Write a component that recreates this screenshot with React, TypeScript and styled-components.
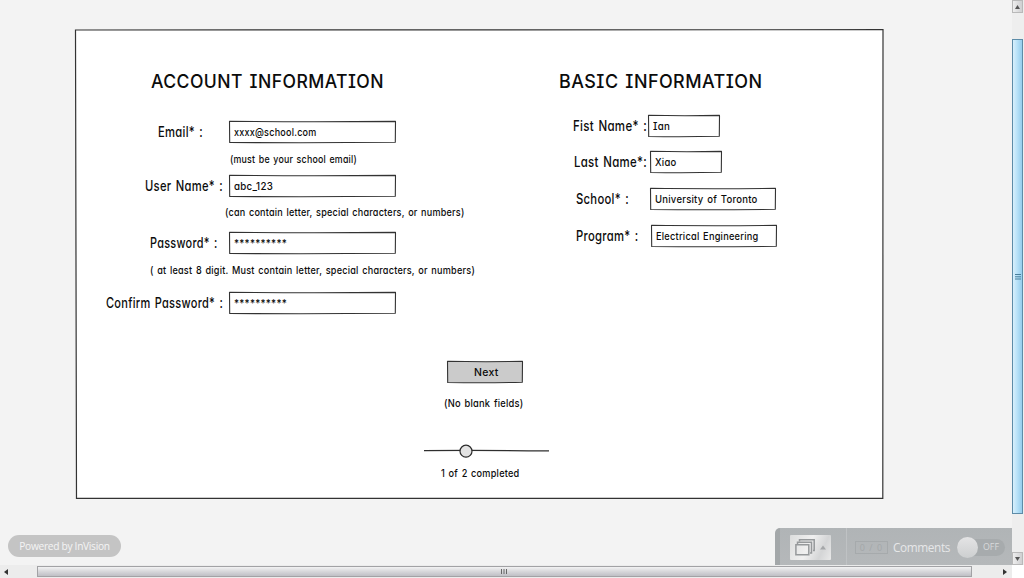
import React, { useLayoutEffect, useRef, useState } from "react";
import styled, { createGlobalStyle } from "styled-components";

const GlobalStyle = createGlobalStyle`
  * { box-sizing: border-box; }
  body { margin: 0; background: #f3f3f3; overflow: hidden; }
`;

const Shell = styled.div`
  display: grid;
  grid-template-columns: 1012px 12px;
  grid-template-rows: 565px 13px;
  width: 1024px;
  height: 578px;
  background: #f3f3f3;
`;

const Viewport = styled.main`
  display: flex;
  flex-direction: column;
  justify-content: space-between;
  padding-top: 29px;
`;

const Panel = styled.section`
  position: relative;
  z-index: 0;
  width: 809px;
  height: 470px;
  margin-left: 75px;
  display: flex;
  flex-direction: column;
`;

const Columns = styled.div`
  display: grid;
  grid-template-columns: 465px 1fr;
  height: 332px;
  padding-top: 43px;
`;

const Column = styled.div`
  display: flex;
  flex-direction: column;
`;

const Line = styled.div<{ $gap?: number; $indent: number; $height: number }>`
  display: flex;
  align-items: center;
  margin-top: ${(p) => p.$gap ?? 0}px;
  padding-left: ${(p) => p.$indent}px;
  height: ${(p) => p.$height}px;
`;

const HeadingLine = styled(Line)`
  padding-top: 1px;
`;

const LabelCell = styled.div<{ $width: number }>`
  flex: 0 0 ${(p) => p.$width}px;
  min-width: 0;
  display: flex;
  padding-top: 1px;
`;

const FieldBox = styled.div<{ $width: number }>`
  position: relative;
  z-index: 0;
  display: flex;
  align-items: center;
  width: ${(p) => p.$width}px;
  height: 22px;
  padding: 2px 0 0 5px;
`;

const NextButton = styled.button`
  position: relative;
  z-index: 0;
  display: flex;
  align-items: center;
  width: 76px;
  height: 22px;
  padding: 2px 0 0 27px;
  border: 0;
  background: transparent;
`;

const FrameSvg = styled.svg`
  position: absolute;
  z-index: -1;
  inset: 0;
  width: 100%;
  height: 100%;
  overflow: visible;
`;

const HandText = styled.span<{ $size: number; $heading: boolean }>`
  display: inline-block;
  flex: none;
  transform-origin: left center;
  font-family: "Comic Sans MS", Inter, sans-serif;
  font-feature-settings: "cv08", "cv11";
  font-size: ${(p) => p.$size}px;
  font-weight: ${(p) => (p.$heading ? 550 : 500)};
  line-height: 1;
  letter-spacing: 0.025em;
  word-spacing: ${(p) => (p.$heading ? -0.1 : 0.1)}em;
  color: #0c0c0c;
  white-space: pre;
`;

interface HandProps {
  text: string;
  width: number;
  size?: number;
  heading?: boolean;
}

/* Text that is condensed or stretched to fill the given width. */
function Hand({ text, width, size = 10.7, heading = false }: HandProps) {
  const ref = useRef<HTMLSpanElement>(null);
  const [scale, setScale] = useState(1);
  useLayoutEffect(() => {
    const el = ref.current;
    if (el) {
      setScale(width / parseFloat(getComputedStyle(el).width));
    }
  }, [text, width]);
  return (
    <HandText ref={ref} $size={size} $heading={heading} style={{ transform: `scaleX(${scale})` }}>
      {text}
    </HandText>
  );
}

function Frame({ w, h, fill = "#fff" }: { w: number; h: number; fill?: string }) {
  const r = w - 0.5;
  const b = h - 0.5;
  return (
    <FrameSvg viewBox={`0 0 ${w} ${h}`} aria-hidden>
      <path
        d={`M.5 .3 Q${w * 0.45} 1 ${r} .4 L${r - 0.2} ${b - 0.2} Q${w * 0.5} ${b + 0.6} .7 ${b} Z`}
        fill={fill}
        stroke="#333"
        strokeWidth="1.1"
        strokeLinejoin="round"
      />
    </FrameSvg>
  );
}

interface FieldProps {
  gap: number;
  indent: number;
  label: string;
  labelWidth: number;
  offset: number;
  width: number;
  value: string;
  valueWidth: number;
}

function Field({ gap, indent, label, labelWidth, offset, width, value, valueWidth }: FieldProps) {
  return (
    <Line $gap={gap} $indent={indent} $height={22}>
      <LabelCell $width={offset}>
        <Hand text={label} width={labelWidth} size={14.5} />
      </LabelCell>
      <FieldBox $width={width}>
        <Frame w={width} h={22} />
        <Hand text={value} width={valueWidth} />
      </FieldBox>
    </Line>
  );
}

function Hint({ gap, indent, text, width }: { gap: number; indent: number; text: string; width: number }) {
  return (
    <Line $gap={gap} $indent={indent} $height={14}>
      <Hand text={text} width={width} />
    </Line>
  );
}

const Footer = styled.footer`
  display: flex;
  justify-content: space-between;
  align-items: flex-start;
  height: 37px;
  padding-left: 8px;
`;

const Badge = styled.div`
  margin-top: 7px;
  width: 113px;
  height: 22px;
  border-radius: 11px;
  background: #c4c4c4;
  color: #f4f4f4;
  font: 400 10.2px/23px "Open Sans", sans-serif;
  text-align: center;
  white-space: nowrap;
  letter-spacing: -0.3px;
`;

const Toolbar = styled.div`
  display: flex;
  align-items: center;
  width: 237px;
  height: 37px;
  border-left: 5px solid #a3a7a9;
  border-radius: 5px 0 0 0;
  background: linear-gradient(#b0b4b6, #b5b8ba);
  font-family: "Open Sans", sans-serif;
`;

const ScreensButton = styled.div`
  width: 41px;
  height: 25px;
  margin: 1px 15px 0 10px;
  border-radius: 1px;
  background: linear-gradient(115deg, #dcdddd, #f0f0f0 45%, #d4d5d6 75%, #e9e9e9);
`;

const Tools = styled.div`
  display: flex;
  align-items: center;
  height: 37px;
  flex: 1;
  border-left: 1px solid #bfc2c4;
  padding-left: 8px;
`;

const Counter = styled.div`
  width: 33px;
  height: 13px;
  margin-top: 1px;
  border: 1px solid #a6aaac;
  color: #a3a7a9;
  font-size: 9px;
  line-height: 11px;
  text-align: center;
  letter-spacing: 1px;
`;

const Comments = styled.span`
  width: 57px;
  margin: 1px 0 0 5px;
  color: #e6e7e8;
  font-size: 11.8px;
  line-height: 16px;
  letter-spacing: -0.38px;
`;

const Toggle = styled.div`
  display: flex;
  align-items: center;
  width: 48px;
  height: 17px;
  margin: 1px 0 0 7px;
  border-radius: 9px;
  background: #a7abad;
  color: #d9dadb;
  font-size: 8.8px;
`;

const Knob = styled.span`
  flex: none;
  width: 21px;
  height: 21px;
  margin-right: 5px;
  border-radius: 50%;
  background: linear-gradient(#e4e4e5, #cdcfd0);
`;

const VerticalBar = styled.div`
  display: flex;
  flex-direction: column;
  justify-content: space-between;
  background: #eee;
`;

const ArrowButton = styled.div`
  display: grid;
  place-items: center;
  width: 11px;
  height: 13px;
  border: 1px solid #b9b9b9;
  background: linear-gradient(90deg, #eee, #cfcfd1);
`;

const VerticalThumb = styled.div`
  display: grid;
  place-items: center;
  width: 11px;
  height: 475px;
  margin: 0 0 12px;
  border: 1px solid #5d8ca8;
  background: linear-gradient(90deg, #d8f0fc, #b9e2f8 45%, #94cdec);
`;

const HorizontalBar = styled.div`
  display: flex;
  align-items: center;
  justify-content: space-between;
  padding: 0 5px 0 4px;
  background: #ececec;
`;

const HorizontalThumb = styled.div`
  display: grid;
  place-items: center;
  width: 935px;
  height: 11px;
  border: 1px solid #a2a2a5;
  background: linear-gradient(#f2f2f3, #d7d7da 50%, #bfbfc5);
  margin-right: 3px;
`;

const Corner = styled.div`
  background: #fff;
`;

function SliderDrawing() {
  return (
    <svg width="126" height="14" viewBox="0 0 126 14" aria-hidden>
      <path d="M0 6.6Q60 6.2 125 6.9" stroke="#2f2f2f" strokeWidth="1.2" fill="none" />
      <circle cx="42" cy="7.2" r="6" fill="#e3e3e3" stroke="#2b2b2b" strokeWidth="1.2" />
    </svg>
  );
}

export default function App() {
  return (
    <>
      <GlobalStyle />
      <Shell>
        <Viewport>
          <Panel>
            <FrameSvg viewBox="0 0 809 470" aria-hidden>
              <path d="M.5 1 L808 .7 L807.8 469.3 L1.5 469.3 Z" fill="#fff" stroke="#333" strokeWidth="1.2" />
            </FrameSvg>
            <Columns>
              <Column>
                <HeadingLine $indent={76} $height={20}>
                  <Hand text="ACCOUNT  INFORMATION" width={233} size={18.8} heading />
                </HeadingLine>
                <Field gap={29} indent={83} label="Email* :" labelWidth={45} offset={71} width={167} value="xxxx@school.com" valueWidth={82.5} />
                <Hint gap={10} indent={155} text="(must be your school email)" width={127} />
                <Field gap={8} indent={70} label="User Name* :" labelWidth={78} offset={84} width={167} value="abc_123" valueWidth={39} />
                <Hint gap={9} indent={150} text="(can contain letter, special characters, or numbers)" width={239.5} />
                <Field gap={12} indent={75} label="Password* :" labelWidth={67.5} offset={79} width={167} value="**********" valueWidth={53} />
                <Hint gap={10} indent={75} text="( at least 8 digit. Must contain letter, special characters, or numbers)" width={325} />
                <Field gap={14} indent={31} label="Confirm Password* :" labelWidth={117} offset={123} width={167} value="**********" valueWidth={53} />
              </Column>
              <Column>
                <HeadingLine $indent={19} $height={20}>
                  <Hand text="BASIC  INFORMATION" width={203.5} size={18.8} heading />
                </HeadingLine>
                <Field gap={23} indent={33} label="Fist Name* :" labelWidth={74} offset={75} width={72} value="Ian" valueWidth={17} />
                <Field gap={14} indent={34} label="Last Name*:" labelWidth={73} offset={76} width={72} value="Xiao" valueWidth={21.5} />
                <Field gap={15} indent={36} label="School* :" labelWidth={53} offset={74} width={126} value="University of Toronto" valueWidth={102.5} />
                <Field gap={15} indent={36} label="Program* :" labelWidth={62.5} offset={75} width={126} value="Electrical Engineering" valueWidth={102.5} />
              </Column>
            </Columns>
            <Line $indent={372} $height={22}>
              <NextButton>
                <Frame w={76} h={22} fill="#cbcbcb" />
                <Hand text="Next" width={24.5} />
              </NextButton>
            </Line>
            <Hint gap={14} indent={369} text="(No blank fields)" width={79.5} />
            <Line $gap={33} $indent={349} $height={14}>
              <SliderDrawing />
            </Line>
            <Hint gap={9} indent={366} text="1 of 2 completed" width={78.5} />
          </Panel>
          <Footer>
            <Badge>Powered by InVision</Badge>
            <Toolbar>
              <ScreensButton>
                <svg width="41" height="25" viewBox="0 0 41 25" fill="none" stroke="#96999b" strokeWidth="1.5" aria-hidden>
                  <path d="M9.5 6.5V4.8H24.2V15.5H23" />
                  <path d="M7.5 9V7.2H21.5V18H20" />
                  <path d="M5.9 9.7H18.8V19.8H5.9Z" />
                  <path d="M30 14.5L33 10.5L36 14.5Z" fill="#a5a7a9" stroke="none" />
                </svg>
              </ScreensButton>
              <Tools>
                <Counter>0 / 0</Counter>
                <Comments>Comments</Comments>
                <Toggle>
                  <Knob />
                  OFF
                </Toggle>
              </Tools>
            </Toolbar>
          </Footer>
        </Viewport>
        <VerticalBar>
          <ArrowButton>
            <svg width="5" height="4" aria-hidden><path d="M0 4L2.5 0L5 4Z" fill="#555" /></svg>
          </ArrowButton>
          <VerticalThumb>
            <svg width="6" height="6" aria-hidden><path d="M0 .5H6M0 2.8H6M0 5H6" stroke="#477f9c" /></svg>
          </VerticalThumb>
          <ArrowButton>
            <svg width="5" height="4" aria-hidden><path d="M0 0L2.5 4L5 0Z" fill="#555" /></svg>
          </ArrowButton>
        </VerticalBar>
        <HorizontalBar>
          <svg width="5" height="6" aria-hidden><path d="M4 0L0 3L4 6Z" fill="#333" /></svg>
          <HorizontalThumb>
            <svg width="7" height="5" aria-hidden><path d="M.5 0V5M3 0V5M5.5 0V5" stroke="#666" /></svg>
          </HorizontalThumb>
          <svg width="4" height="6" aria-hidden><path d="M0 0L4 3L0 6Z" fill="#333" /></svg>
        </HorizontalBar>
        <Corner />
      </Shell>
    </>
  );
}
